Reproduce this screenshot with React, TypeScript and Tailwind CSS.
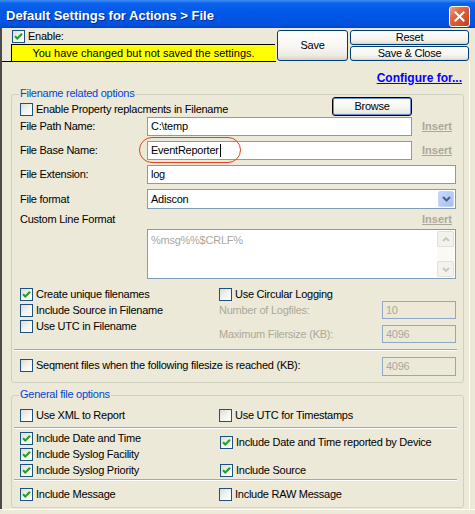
import React from "react";

function Box({ checked = false }: { checked?: boolean }) {
  return (
    <span className="w-[13px] h-[13px] shrink-0 border border-[#1C5180] bg-[linear-gradient(135deg,#DCDCD7_0%,#F4F4F0_55%,#FFFFFF_100%)] flex items-center justify-center">
      {checked ? (
        <svg width="9" height="9" viewBox="0 0 9 9" className="block">
          <polyline points="1,4.2 3.3,6.5 8,1.8" fill="none" stroke="#21A121" strokeWidth="2.1" />
        </svg>
      ) : null}
    </span>
  );
}

function Check({
  checked = false,
  label,
  className = "",
}: {
  checked?: boolean;
  label: string;
  className?: string;
}) {
  return (
    <div className={"flex items-center h-[16px] " + className}>
      <Box checked={checked} />
      <span className="ml-[3px] leading-[13px] whitespace-nowrap">{label}</span>
    </div>
  );
}

function XPButton({ children, className = "" }: { children: React.ReactNode; className?: string }) {
  return (
    <div
      className={
        "flex items-center justify-center rounded-[3px] border border-[#003C74] bg-[linear-gradient(to_bottom,#FFFFFF_0%,#F7F6F2_55%,#ECEAE2_85%,#D6D0C5_100%)] text-black leading-[13px] " +
        className
      }
    >
      {children}
    </div>
  );
}

function Group({
  title,
  className = "",
  children,
}: {
  title: string;
  className?: string;
  children: React.ReactNode;
}) {
  return (
    <div className={"relative ml-[9px] w-[453px] border border-[#D0D0BF] rounded-[3px] flex flex-col " + className}>
      <span className="absolute left-[7px] -top-[8px] px-[1px] bg-[#ECE9D8] text-[#0046D5] leading-[13px] whitespace-nowrap">
        {title}
      </span>
      {children}
    </div>
  );
}

function Sep() {
  return <div className="ml-[2px] w-[443px] h-[2px] border-t border-[#ACA899] border-b border-b-white" />;
}

function Insert() {
  return (
    <span className="font-bold text-[#ACA899] underline tracking-normal leading-[13px] whitespace-nowrap">Insert</span>
  );
}

function DisInput({ value, className = "" }: { value: string; className?: string }) {
  return (
    <div
      className={
        "w-[74px] border border-[#8FA7C8] bg-[#ECE9D8] flex items-center pl-[3px] text-[#ACA899] leading-[13px] " +
        className
      }
    >
      {value}
    </div>
  );
}

export default function App() {
  return (
    <div className="w-[475px] h-[514px] bg-[#ECE9D8] flex flex-col overflow-hidden font-['Liberation_Sans',Arial,sans-serif] text-[11px] tracking-[-0.25px] text-black">
      {/* Title bar */}
      <div className="h-[28px] shrink-0 flex pl-[6px] pr-[5px] bg-[linear-gradient(to_bottom,#3D8DF5_0%,#0A62EC_12%,#0058E6_45%,#0055E2_75%,#0050DA_92%,#003FC8_100%)]">
        <span className="self-center pt-[3px] text-white font-bold text-[13px] tracking-normal leading-[16px] [text-shadow:1px_1px_0_#0B2A8C] whitespace-nowrap">
          Default Settings for Actions &gt; File
        </span>
        <div className="ml-auto self-end mb-[1px] w-[21px] h-[21px] rounded-[3px] border border-white bg-[linear-gradient(135deg,#EFA085_0%,#E4663F_35%,#D6512A_70%,#BE3D1C_100%)] flex items-center justify-center">
          <svg width="11" height="11" viewBox="0 0 11 11" className="block">
            <path d="M1.5 1.5 L9.5 9.5 M9.5 1.5 L1.5 9.5" stroke="#FFFFFF" strokeWidth="2" strokeLinecap="square" />
          </svg>
        </div>
      </div>

      {/* Body */}
      <div className="h-[481px] shrink-0 flex flex-col border-l-2 border-[#4A4A4A]">
        {/* Top section */}
        <div className="h-[34px] shrink-0 flex">
          <div className="w-[274px] border-b border-black flex flex-col">
            <div className="h-[16px] flex items-center pl-[10px]">
              <Box checked />
              <span className="ml-[3px] leading-[13px]">Enable:</span>
            </div>
            <div className="ml-[9px] w-[264px] h-[17px] border-l border-t border-black bg-[#FFFF00] flex items-center justify-center leading-[13px] tracking-[0px] whitespace-nowrap">
              You have changed but not saved the settings.
            </div>
          </div>
          <div className="flex pt-[2px] pl-[1px]">
            <XPButton className="w-[71px] h-[31px]">Save</XPButton>
            <div className="ml-[2px] flex flex-col gap-[1px]">
              <XPButton className="w-[119px] h-[15px]">Reset</XPButton>
              <XPButton className="w-[119px] h-[15px]">Save &amp; Close</XPButton>
            </div>
          </div>
        </div>

        {/* Panel */}
        <div className="w-[468px] flex-1 flex flex-col border-r border-white">
          <div className="h-[32px] shrink-0 flex justify-end items-start pt-[9px] pr-[7px]">
            <span className="text-[12px] font-bold text-[#0000FF] underline leading-[14px] tracking-[0px] whitespace-nowrap">
              Configure for...
            </span>
          </div>

          {/* Group 1 */}
          <Group title="Filename related options" className="h-[289px] shrink-0">
            {/* Red annotation */}
            <div className="absolute left-[127px] top-[42px] w-[102px] h-[26px] rounded-[13px] border border-[#D9461F] pointer-events-none" />

            <div className="mt-[2px] h-[19px] flex items-end">
              <div className="pl-[8px] flex items-center h-[13px]">
                <Box />
                <span className="ml-[3px] leading-[13px] whitespace-nowrap">Enable Property replacments in Filename</span>
              </div>
              <XPButton className="ml-auto mr-[51px] w-[80px] h-[19px] border-black shadow-[inset_0_0_0_1px_#6D8FD0]">
                Browse
              </XPButton>
            </div>

            <div className="mt-[1px] h-[19px] flex items-center pl-[8px]">
              <span className="w-[127px] leading-[13px]">File Path Name:</span>
              <div className="w-[265px] h-[19px] border border-[#7F9DB9] bg-white flex items-center pl-[3px] leading-[13px]">
                C:\temp
              </div>
              <span className="ml-[10px]">
                <Insert />
              </span>
            </div>

            <div className="mt-[5px] h-[19px] flex items-center pl-[8px]">
              <span className="w-[127px] leading-[13px]">File Base Name:</span>
              <div className="w-[265px] h-[19px] border border-[#7F9DB9] bg-white flex items-center pl-[3px] leading-[13px]">
                EventReporter
                <span className="ml-[1px] w-[1px] h-[13px] bg-black" />
              </div>
              <span className="ml-[10px]">
                <Insert />
              </span>
            </div>

            <div className="mt-[5px] h-[19px] flex items-center pl-[8px]">
              <span className="w-[127px] leading-[13px]">File Extension:</span>
              <div className="w-[309px] h-[19px] border border-[#7F9DB9] bg-white flex items-center pl-[3px] leading-[13px]">
                log
              </div>
            </div>

            <div className="mt-[5px] h-[20px] flex items-center pl-[8px]">
              <span className="w-[127px] leading-[13px]">File format</span>
              <div className="w-[309px] h-[20px] border border-[#7F9DB9] bg-white flex items-center pl-[3px] leading-[13px]">
                Adiscon
                <div className="ml-auto mr-[1px] w-[16px] h-[16px] rounded-[2px] border border-[#C3D3FD] bg-[linear-gradient(135deg,#C8D8FC_0%,#B6CAF7_60%,#A7BEF3_100%)] flex items-center justify-center">
                  <svg width="9" height="6" viewBox="0 0 9 6" className="block">
                    <path d="M1 1 L4.5 4.5 L8 1" fill="none" stroke="#4D6185" strokeWidth="2" />
                  </svg>
                </div>
              </div>
            </div>

            <div className="mt-[2px] h-[16px] flex items-center pl-[8px]">
              <span className="w-[127px] leading-[13px]">Custom Line Format</span>
              <span className="ml-[275px]">
                <Insert />
              </span>
            </div>

            <div className="mt-[2px] ml-[135px] w-[309px] h-[50px] border border-[#7F9DB9] bg-white flex">
              <span className="pl-[3px] pt-[4px] text-[#ACA899] leading-[13px]">%msg%%$CRLF%</span>
              <div className="ml-auto mr-[1px] my-[1px] w-[17px] flex flex-col justify-between bg-[#FAF9F5]">
                <div className="h-[16px] rounded-[2px] border border-[#E3E1D6] bg-[#F3F2EC] flex items-center justify-center">
                  <svg width="8" height="5" viewBox="0 0 8 5" className="block">
                    <path d="M1 4 L4 1 L7 4" fill="none" stroke="#C9C7BA" strokeWidth="1.8" />
                  </svg>
                </div>
                <div className="h-[16px] rounded-[2px] border border-[#E3E1D6] bg-[#F3F2EC] flex items-center justify-center">
                  <svg width="8" height="5" viewBox="0 0 8 5" className="block">
                    <path d="M1 1 L4 4 L7 1" fill="none" stroke="#C9C7BA" strokeWidth="1.8" />
                  </svg>
                </div>
              </div>
            </div>

            <div className="mt-[7px] flex">
              <div className="w-[207px] pl-[8px] flex flex-col">
                <Check checked label="Create unique filenames" />
                <Check label="Include Source in Filename" />
                <Check label="Use UTC in Filename" />
              </div>
              <div className="flex flex-col">
                <div className="h-[15px] flex items-start">
                  <div className="flex items-center h-[16px]">
                    <Box />
                    <span className="ml-[3px] leading-[13px] whitespace-nowrap">Use Circular Logging</span>
                  </div>
                </div>
                <div className="h-[18px] flex items-center">
                  <span className="w-[163px] text-[#ACA899] leading-[13px]">Number of Logfiles:</span>
                  <DisInput value="10" className="h-[18px]" />
                </div>
                <div className="mt-[6px] h-[18px] flex items-center">
                  <span className="w-[163px] text-[#ACA899] leading-[13px]">Maximum Filersize (KB):</span>
                  <DisInput value="4096" className="h-[18px]" />
                </div>
              </div>
            </div>

            <div className="mt-[6px]">
              <Sep />
            </div>

            <div className="mt-[6px] h-[19px] flex items-center">
              <div className="pl-[8px] mb-[3px] flex items-center h-[16px]">
                <Box />
                <span className="ml-[3px] leading-[13px] whitespace-nowrap">
                  Seqment files when the following filesize is reached (KB):
                </span>
              </div>
              <DisInput value="4096" className="ml-auto mr-[7px] h-[19px]" />
            </div>
          </Group>

          {/* Group 2 */}
          <Group title="General file options" className="mt-[12px] h-[113px] shrink-0">
            <div className="mt-[11px] flex">
              <div className="w-[207px] pl-[8px]">
                <Check label="Use XML to Report" />
              </div>
              <Check label="Use UTC for Timestamps" />
            </div>
            <div className="mt-[4px]">
              <Sep />
            </div>
            <div className="flex">
              <div className="w-[207px] pl-[8px] pt-[1px] flex flex-col">
                <Check checked label="Include Date and Time" />
                <Check checked label="Include Syslog Facility" />
                <Check checked label="Include Syslog Priority" />
              </div>
              <div className="flex flex-col pl-[1px]">
                <Check checked label="Include Date and Time reported by Device" className="mt-[5px]" />
                <Check checked label="Include Source" className="mt-[12px]" />
              </div>
            </div>
            <div className="mt-[1px]">
              <Sep />
            </div>
            <div className="mt-[5px] flex">
              <div className="w-[207px] pl-[8px]">
                <Check checked label="Include Message" />
              </div>
              <Check label="Include RAW Message" />
            </div>
          </Group>
        </div>
      </div>
      <div className="flex-1 border-t border-white bg-[#ECE9D8]" />
    </div>
  );
}
